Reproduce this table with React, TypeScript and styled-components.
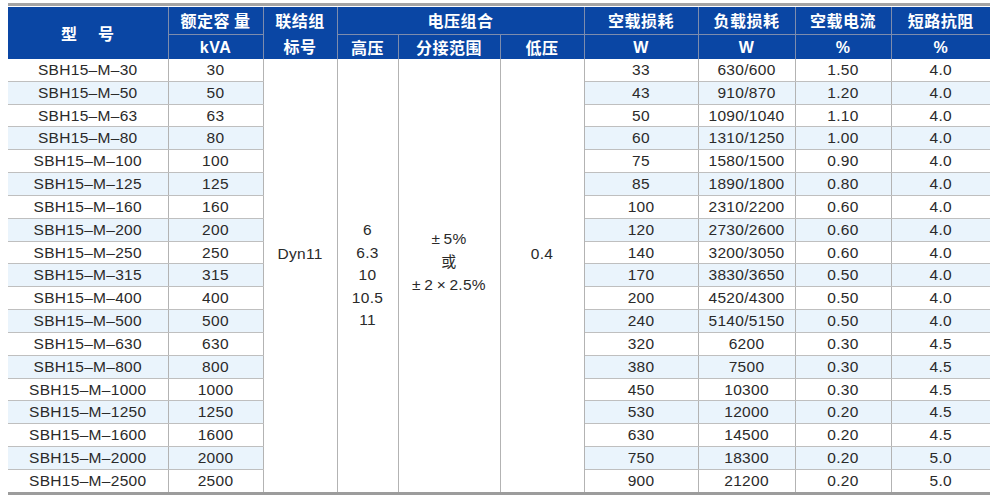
import * as React from 'react';
import styled, { createGlobalStyle } from 'styled-components';

const COLORS = {
  blue: '#0a46a4',
  headerLine: '#7d8cad',
  rowLine: '#bfbfbf',
  colLine: '#b3b3b3',
  stripe: '#eaf4fc',
  text: '#2a2a2a',
  frame: '#a4a4a4',
};

const GlobalStyle = createGlobalStyle`
  body {
    margin: 0;
    background: #fff;
  }
`;

const StyledWrapper = styled.div`
  width: 982px;
  margin: 3px 0 0 8px;
  padding-top: 1px;
  border-top: 3px solid ${COLORS.frame};
  border-bottom: 3px solid #9c9c9c;
`;

const StyledTable = styled.table`
  width: 982px;
  border-collapse: collapse;
  table-layout: fixed;
  font-family: 'Liberation Sans', Arial, 'Noto Sans CJK SC', sans-serif;
`;

const StyledCol = styled.col<{ $w: number }>`
  width: ${(p) => p.$w}px;
`;

const StyledHeadRow = styled.tr<{ $h: number }>`
  height: ${(p) => p.$h}px;
`;

const StyledTh = styled.th<{ $last?: boolean; $top?: boolean }>`
  padding: 0;
  background: ${COLORS.blue};
  color: #fff;
  font-family: 'Noto Sans CJK SC', 'Liberation Sans', sans-serif;
  font-weight: 700;
  font-size: 16px;
  letter-spacing: 0.5px;
  line-height: 22px;
  text-align: center;
  vertical-align: middle;
  border-right: ${(p) => (p.$last ? 'none' : `1px solid ${COLORS.headerLine}`)};
  border-top: ${(p) => (p.$top ? `1px solid ${COLORS.headerLine}` : 'none')};
`;

const StyledStack = styled.div`
  display: flex;
  flex-direction: column;
  gap: 4px;
`;

const StyledUnit = styled.span`
  font-family: 'Liberation Sans', Arial, sans-serif;
  font-weight: 700;
  font-size: 16px;
`;

const StyledBodyRow = styled.tr`
  height: 22.84px;
`;

const StyledTd = styled.td<{ $alt?: boolean; $last?: boolean; $end?: boolean }>`
  padding: 0;
  color: ${COLORS.text};
  font-size: 15.5px;
  letter-spacing: 0.3px;
  line-height: 18px;
  text-align: center;
  vertical-align: middle;
  background: ${(p) => (p.$alt ? COLORS.stripe : '#fff')};
  border-bottom: ${(p) => (p.$end ? 'none' : `1px solid ${COLORS.rowLine}`)};
  border-right: ${(p) => (p.$last ? 'none' : `1.5px solid ${COLORS.colLine}`)};
`;

const StyledMergedTd = styled.td<{ $lift: number }>`
  padding: 0 0 ${(p) => p.$lift}px;
  color: ${COLORS.text};
  font-size: 15.5px;
  letter-spacing: 0.3px;
  line-height: 22.5px;
  text-align: center;
  vertical-align: middle;
  background: #fff;
  border-right: 1.5px solid ${COLORS.colLine};
`;

const StyledCjk = styled.span`
  font-family: 'Noto Sans CJK SC', sans-serif;
  font-size: 15px;
`;

const WIDTHS = [160, 95, 74, 61, 102, 84, 114, 97, 96, 99];

// [容量, 空载损耗, 负载损耗, 空载电流, 短路抗阻]
const ROWS: string[][] = [
  ['30', '33', '630/600', '1.50', '4.0'],
  ['50', '43', '910/870', '1.20', '4.0'],
  ['63', '50', '1090/1040', '1.10', '4.0'],
  ['80', '60', '1310/1250', '1.00', '4.0'],
  ['100', '75', '1580/1500', '0.90', '4.0'],
  ['125', '85', '1890/1800', '0.80', '4.0'],
  ['160', '100', '2310/2200', '0.60', '4.0'],
  ['200', '120', '2730/2600', '0.60', '4.0'],
  ['250', '140', '3200/3050', '0.60', '4.0'],
  ['315', '170', '3830/3650', '0.50', '4.0'],
  ['400', '200', '4520/4300', '0.50', '4.0'],
  ['500', '240', '5140/5150', '0.50', '4.0'],
  ['630', '320', '6200', '0.30', '4.5'],
  ['800', '380', '7500', '0.30', '4.5'],
  ['1000', '450', '10300', '0.30', '4.5'],
  ['1250', '530', '12000', '0.20', '4.5'],
  ['1600', '630', '14500', '0.20', '4.5'],
  ['2000', '750', '18300', '0.20', '5.0'],
  ['2500', '900', '21200', '0.20', '5.0'],
];

const App: React.FC = () => {
  return (
    <>
      <GlobalStyle />
      <StyledWrapper>
        <StyledTable>
          <colgroup>
            {WIDTHS.map((w, i) => (
              <StyledCol key={i} $w={w} />
            ))}
          </colgroup>
          <thead>
            <StyledHeadRow $h={27}>
              <StyledTh rowSpan={2}>型{'\u3000 '}号</StyledTh>
              <StyledTh>额定容 量</StyledTh>
              <StyledTh rowSpan={2}>
                <StyledStack>
                  <span>联结组</span>
                  <span>标号</span>
                </StyledStack>
              </StyledTh>
              <StyledTh colSpan={3}>电压组合</StyledTh>
              <StyledTh>空载损耗</StyledTh>
              <StyledTh>负载损耗</StyledTh>
              <StyledTh>空载电流</StyledTh>
              <StyledTh $last>短路抗阻</StyledTh>
            </StyledHeadRow>
            <StyledHeadRow $h={23}>
              <StyledTh $top>
                <StyledUnit>kVA</StyledUnit>
              </StyledTh>
              <StyledTh $top>高压</StyledTh>
              <StyledTh $top>分接范围</StyledTh>
              <StyledTh $top>低压</StyledTh>
              <StyledTh $top>
                <StyledUnit>W</StyledUnit>
              </StyledTh>
              <StyledTh $top>
                <StyledUnit>W</StyledUnit>
              </StyledTh>
              <StyledTh $top>
                <StyledUnit>%</StyledUnit>
              </StyledTh>
              <StyledTh $top $last>
                <StyledUnit>%</StyledUnit>
              </StyledTh>
            </StyledHeadRow>
          </thead>
          <tbody>
            {ROWS.map(([kva, noLoad, load, current, imp], i) => {
              const alt = i % 2 === 1;
              const end = i === ROWS.length - 1;
              return (
                <StyledBodyRow key={kva}>
                  <StyledTd $alt={alt} $end={end}>
                    SBH15–M–{kva}
                  </StyledTd>
                  <StyledTd $alt={alt} $end={end}>
                    {kva}
                  </StyledTd>
                  {i === 0 && (
                    <>
                      <StyledMergedTd rowSpan={ROWS.length} $lift={42}>
                        Dyn11
                      </StyledMergedTd>
                      <StyledMergedTd rowSpan={ROWS.length} $lift={0}>
                        6
                        <br />
                        6.3
                        <br />
                        10
                        <br />
                        10.5
                        <br />
                        11
                      </StyledMergedTd>
                      <StyledMergedTd rowSpan={ROWS.length} $lift={27}>
                        ±{'\u2009'}5%
                        <br />
                        <StyledCjk>或</StyledCjk>
                        <br />
                        ±{'\u2009'}2{'\u2009'}×{'\u2009'}2.5%
                      </StyledMergedTd>
                      <StyledMergedTd rowSpan={ROWS.length} $lift={42}>
                        0.4
                      </StyledMergedTd>
                    </>
                  )}
                  <StyledTd $alt={alt} $end={end}>
                    {noLoad}
                  </StyledTd>
                  <StyledTd $alt={alt} $end={end}>
                    {load}
                  </StyledTd>
                  <StyledTd $alt={alt} $end={end}>
                    {current}
                  </StyledTd>
                  <StyledTd $alt={alt} $end={end} $last>
                    {imp}
                  </StyledTd>
                </StyledBodyRow>
              );
            })}
          </tbody>
        </StyledTable>
      </StyledWrapper>
    </>
  );
};

export default App;
